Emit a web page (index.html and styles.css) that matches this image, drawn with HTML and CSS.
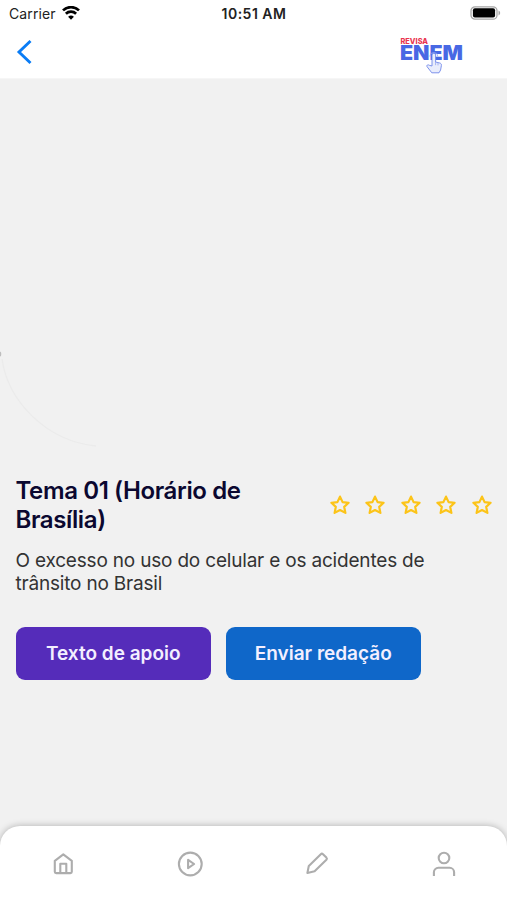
FILE: index.html
```html
<!DOCTYPE html>
<html lang="pt-BR">
  <head>
    <meta charset="utf-8">
    <meta name="viewport" content="width=device-width, initial-scale=1">
    <title>Revisa ENEM</title>
    <link rel="stylesheet" href="styles.css">
  </head>
  <body>
    <header class="top">
      <div class="status">
        <div class="carrier">
          <span>Carrier</span>
          <svg width="18" height="14" viewBox="0 0 18 14" fill="none" stroke="#000" stroke-width="2.7">
            <path d="M1 4.4a11.5 11.5 0 0 1 16 0M3.9 7.8a7.3 7.3 0 0 1 10.2 0"/>
            <path d="M9 13.7L6.1 10.8a4.2 4.2 0 0 1 5.8 0z" fill="#000" stroke="none"/>
          </svg>
        </div>
        <span class="clock">10:51 AM</span>
        <svg class="battery" width="31" height="14" viewBox="0 0 31 14">
          <rect x="1" y=".8" width="26" height="12.4" rx="4" fill="#fff" stroke="#a5a5a5" stroke-width="1.3"/>
          <rect x="2.9" y="2.2" width="22.2" height="9.4" rx="2" fill="#000"/>
          <path d="M28.5 4.6c2.2.7 2.2 4.1 0 4.8z" fill="#a5a5a5"/>
        </svg>
      </div>
      <div class="nav">
        <svg width="16" height="26" viewBox="0 0 16 26" fill="none" stroke="#0a7cf5" stroke-width="2.9">
          <path d="M14.5 2L3 13l11.5 11"/>
        </svg>
        <svg class="logo" width="66" height="40" viewBox="0 0 66 40">
          <text class="revisa" x="1.5" y="7.5" textLength="27.5" lengthAdjust="spacingAndGlyphs">REVISA</text>
          <text class="enem" x="1" y="23.8" textLength="63" lengthAdjust="spacingAndGlyphs">ENEM</text>
          <path d="M33 30v-11a1.8 1.8 0 0 1 3.6 0v7l4.2 1c1.2.4 1.8 1.2 1.6 2.5l-.8 4.5-1.6 2.8h-7.2l-4.8-6.2c-.8-1.3 1-2.4 2.3-1.3z" fill="#e9edfc" stroke="#7088ea" stroke-width=".9"/>
          <path d="M36.6 26v3.2M39 27v2.4M30.8 20.5a4 4 0 1 1 8 0" fill="none" stroke="#93a5ee" stroke-width=".8"/>
        </svg>
      </div>
    </header>

    <main class="page">
      <svg class="arc" width="130" height="110" viewBox="0 0 130 110" fill="none">
        <path d="M2 14C8 56 46 96 96 101" stroke="#ebebeb" stroke-width="1.3"/>
        <ellipse cx="0" cy="9" rx="1.3" ry="2.5" fill="#bdbdbd"/>
      </svg>

      <div class="heading">
        <h1>Tema 01 (Horário de<br>Brasília)</h1>
        <div class="stars">
          <svg viewBox="0 0 22 22"><path d="M11 2.6l2.6 5.5 6 .7-4.4 4.1 1.2 6L11 16l-5.4 2.9 1.2-6-4.4-4.1 6-.7z"/></svg>
          <svg viewBox="0 0 22 22"><path d="M11 2.6l2.6 5.5 6 .7-4.4 4.1 1.2 6L11 16l-5.4 2.9 1.2-6-4.4-4.1 6-.7z"/></svg>
          <svg viewBox="0 0 22 22"><path d="M11 2.6l2.6 5.5 6 .7-4.4 4.1 1.2 6L11 16l-5.4 2.9 1.2-6-4.4-4.1 6-.7z"/></svg>
          <svg viewBox="0 0 22 22"><path d="M11 2.6l2.6 5.5 6 .7-4.4 4.1 1.2 6L11 16l-5.4 2.9 1.2-6-4.4-4.1 6-.7z"/></svg>
          <svg viewBox="0 0 22 22"><path d="M11 2.6l2.6 5.5 6 .7-4.4 4.1 1.2 6L11 16l-5.4 2.9 1.2-6-4.4-4.1 6-.7z"/></svg>
        </div>
      </div>
      <p class="description">O excesso no uso do celular e os acidentes de<br>trânsito no Brasil</p>
      <div class="actions">
        <button class="btn btn-support">Texto de apoio</button>
        <button class="btn btn-send">Enviar redação</button>
      </div>
    </main>

    <nav class="tabbar">
      <a class="tab">
        <svg viewBox="0 0 28 28"><path d="M5.8 10.8L14.3 4.4l8.5 6.4v10.9a1.4 1.4 0 0 1-1.4 1.4H7.2a1.4 1.4 0 0 1-1.4-1.4zM11.3 23v-9.2h6V23"/></svg>
      </a>
      <a class="tab">
        <svg viewBox="0 0 28 28"><circle cx="14.3" cy="14" r="11.4"/><path d="M12.1 9.8v8.4l6-4.2z"/></svg>
      </a>
      <a class="tab">
        <svg viewBox="0 0 28 28"><path d="M4.4 22.9l1.4-7L17.8 4.2a1.6 1.6 0 0 1 2.2 0l3.4 3.4a1.6 1.6 0 0 1 0 2.2L11.6 21.2z"/></svg>
      </a>
      <a class="tab">
        <svg viewBox="0 0 28 28"><circle cx="14" cy="8" r="5.3"/><path d="M3.9 26v-3.7a4.5 4.5 0 0 1 4.5-4.5h11.2a4.5 4.5 0 0 1 4.5 4.5V26"/></svg>
      </a>
    </nav>
  </body>
</html>
```
FILE: styles.css
```css
* {
  box-sizing: border-box;
}

body {
  margin: 0;
  height: 100vh;
  display: flex;
  flex-direction: column;
  overflow: hidden;
  background: #f1f1f1;
  font-family: Inter, "Liberation Sans", sans-serif;
}

svg {
  display: block;
  flex: none;
}

/* status bar and navigation */
.top {
  height: 79px;
  background: #fff;
  border-bottom: 1px solid #f6f6f6;
}

.status {
  height: 26px;
  padding: 0 6px 0 9px;
  display: grid;
  grid-template-columns: 1fr auto 1fr;
  align-items: center;
  font-size: 14px;
  color: #222;
}

.carrier {
  display: flex;
  align-items: center;
  gap: 6px;
}

.carrier span {
  letter-spacing: 0.1px;
}

.clock {
  font-weight: 600;
  font-size: 14px;
  letter-spacing: 0.5px;
  margin-right: 2px;
}

.battery {
  justify-self: end;
}

.nav {
  height: 52px;
  padding: 0 42px 0 16px;
  display: flex;
  align-items: center;
  justify-content: space-between;
}

.logo {
  margin-top: 8px;
}

.revisa {
  font: 800 7.5px Inter, sans-serif;
  fill: #ea3550;
}

.enem {
  font: 900 20px Inter, sans-serif;
  fill: #4868e4;
}

/* essay theme */
.page {
  position: relative;
  flex: 1;
  padding: 396.5px 16px 0 15.5px;
}

.arc {
  position: absolute;
  left: 0;
  top: 266px;
}

.heading {
  display: flex;
  align-items: center;
  justify-content: space-between;
}

h1 {
  margin: 0;
  font-size: 24px;
  line-height: 29px;
  font-weight: 600;
  letter-spacing: -0.38px;
  color: #0b0830;
}

.stars {
  display: flex;
  gap: 13.5px;
  margin-right: -1.5px;
}

.stars svg {
  width: 22px;
  height: 22px;
  fill: none;
  stroke: #fcc419;
  stroke-width: 2.2;
  stroke-linejoin: round;
}

.description {
  margin: 15px 0 0;
  font-size: 19px;
  line-height: 23.5px;
  letter-spacing: -0.19px;
  color: #333;
}

.actions {
  display: flex;
  gap: 14.5px;
  margin-top: 31.5px;
}

.btn {
  width: 195.5px;
  height: 53px;
  padding: 0;
  border: none;
  border-radius: 9px;
  color: #f3efff;
  font: 600 19px Inter, sans-serif;
}

.btn-support {
  background: #552cba;
}

.btn-send {
  background: #0f67c9;
}

/* bottom tabs */
.tabbar {
  height: 74px;
  display: grid;
  grid-template-columns: repeat(4, 1fr);
  background: #fff;
  border-radius: 20px 20px 0 0;
  box-shadow: 0 0 7px rgba(0, 0, 0, 0.28);
}

.tab {
  display: flex;
  justify-content: center;
  padding-top: 24px;
}

.tab svg {
  width: 28px;
  height: 28px;
  fill: none;
  stroke: #adadad;
  stroke-width: 2.1;
  stroke-linejoin: round;
}
```
